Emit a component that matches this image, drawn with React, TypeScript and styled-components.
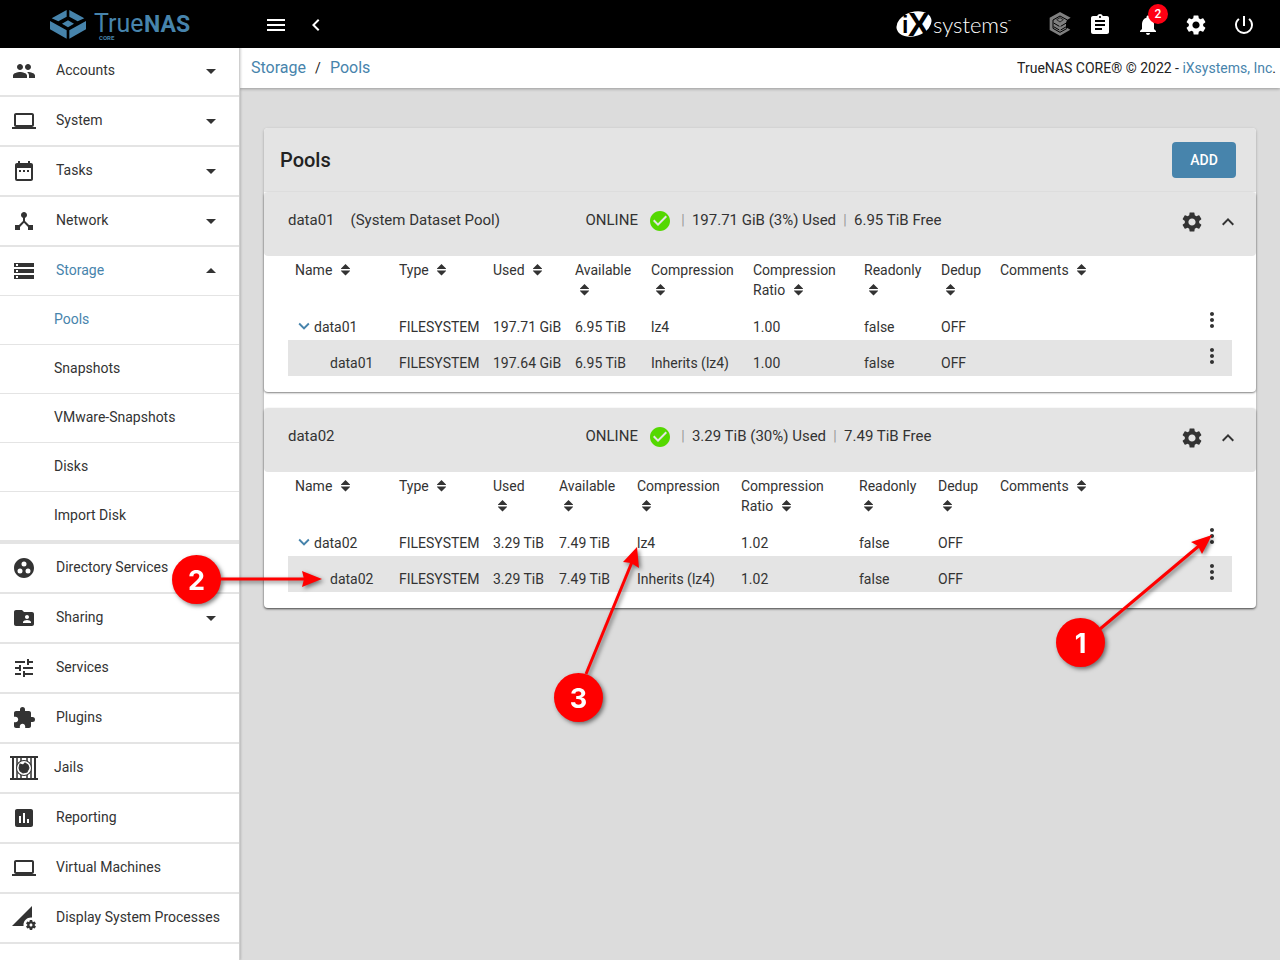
import React from 'react';
import styled, { createGlobalStyle } from 'styled-components';
import {
  MdArrowDropDown, MdArrowDropUp, MdAssessment, MdAssignment, MdCheckCircle, MdChevronLeft,
  MdComputer, MdDateRange, MdDeviceHub, MdExpandLess, MdExpandMore, MdExtension, MdFolderShared,
  MdGroupWork, MdMenu, MdMoreVert, MdNotifications, MdPeople, MdPermDataSetting,
  MdPowerSettingsNew, MdSettings, MdStorage, MdTune,
} from 'react-icons/md';

const color = {
  accent: '#4784ac',
  text: '#333333',
  line: '#e4e4e4',
  panel: '#e4e4e4',
  page: '#dcdcdc',
};

const GlobalStyle = createGlobalStyle`
  *, *::before, *::after { box-sizing: border-box; }
  body { margin: 0; background: ${color.page}; color: ${color.text}; font: 14px/20px Roboto, sans-serif; }
  a { color: inherit; text-decoration: none; }
  button { border: 0; padding: 0; background: none; color: inherit; font: inherit; cursor: pointer; }
  svg { display: block; }
`;

const Page = styled.div`
  position: relative;
  display: flex;
  flex-direction: column;
  min-height: 100vh;
  overflow: hidden;
`;

/* ---------- top bar ---------- */
const TopBar = styled.header`
  position: relative;
  z-index: 2;
  display: flex;
  align-items: center;
  height: 48px;
  background: #000;
  color: #fff;
`;
const Brand = styled.a`
  display: flex;
  justify-content: center;
  width: 240px;
`;
const TopTools = styled.div<{ $gap: number }>`
  display: flex;
  align-items: center;
  gap: ${(p) => p.$gap}px;
  padding: 2px 24px 0;
`;
const VendorGroup = styled.div`
  display: flex;
  align-items: center;
  gap: 34px;
  margin: 0 -8px 0 auto;
`;
const IconButton = styled.button`
  position: relative;
  display: block;
  width: 24px;
  height: 24px;
  font-size: 24px;
  line-height: 24px;
`;
const Badge = styled.span`
  position: absolute;
  top: -9px;
  right: -8px;
  width: 20px;
  height: 20px;
  border-radius: 50%;
  background: #ff0013;
  font-size: 12px;
  font-weight: 500;
  line-height: 20px;
  text-align: center;
`;

/* ---------- sidebar ---------- */
const Body = styled.div`
  display: flex;
  flex: 1;
`;
const Sidebar = styled.nav`
  position: relative;
  z-index: 1;
  flex: none;
  width: 240px;
  margin-top: -1px;
  border-right: 1px solid #cfcfcf;
  background: #fff;
  box-shadow: 1px 0 2px rgba(0, 0, 0, 0.16);
`;
const NavList = styled.ul`
  margin: 0;
  padding: 0;
  list-style: none;
`;
const NavEntry = styled.li`
  border-bottom: 2px solid ${color.line};
`;
const NavLink = styled.a<{ $active?: boolean }>`
  display: flex;
  align-items: center;
  height: 48px;
  padding: 0 16px 0 12px;
  color: ${(p) => (p.$active ? color.accent : color.text)};
  & > svg { flex: none; width: 24px; height: 24px; color: ${color.text}; }
`;
const NavLabel = styled.span<{ $tight?: boolean }>`
  flex: 1;
  padding: 0 0 2px ${(p) => (p.$tight ? 18 : 20)}px;
  white-space: nowrap;
`;
const SubList = styled(NavList)`
  border-top: 1px solid ${color.line};
  border-bottom: 1px solid ${color.line};
`;
const SubEntry = styled.li`
  border-bottom: 1px solid ${color.line};
`;
const SubLink = styled.a<{ $active?: boolean }>`
  display: block;
  padding: 13px 0 15px 54px;
  color: ${(p) => (p.$active ? color.accent : color.text)};
`;

/* ---------- content ---------- */
const Content = styled.main`
  flex: 1;
  min-width: 0;
`;
const CrumbBar = styled.div`
  display: flex;
  align-items: center;
  justify-content: space-between;
  height: 40px;
  padding: 0 4px 0 11px;
  background: #fff;
  color: #222;
  box-shadow: 0 1px 3px rgba(0, 0, 0, 0.3);
`;
const Crumbs = styled.div`
  display: flex;
  gap: 8px;
  font-size: 16px;
  & > a { color: ${color.accent}; }
  & > a + span { width: 8px; font-size: 14px; text-align: center; }
`;
const Copyright = styled.div`
  & > a { color: ${color.accent}; }
`;
const Card = styled.section`
  margin: 40px 24px;
  border-radius: 4px;
  background: #fff;
  box-shadow: 0 1px 3px rgba(0, 0, 0, 0.28);
`;
const CardHeader = styled.div`
  display: flex;
  align-items: center;
  justify-content: space-between;
  height: 64px;
  padding: 0 20px 0 16px;
  border-radius: 4px 4px 0 0;
  background: ${color.panel};
`;
const CardTitle = styled.h1`
  margin: 0;
  color: #222;
  font-size: 20px;
  font-weight: 500;
  line-height: 24px;
`;
const AddButton = styled.button`
  width: 64px;
  height: 36px;
  border-radius: 4px;
  background: ${color.accent};
  color: #fff;
  font-weight: 500;
`;
const Pools = styled.div`
  display: grid;
  gap: 16px;
`;
const Panel = styled.article`
  padding-bottom: 16px;
  border-radius: 4px;
  background: #fff;
  box-shadow: 0 1px 2px rgba(0, 0, 0, 0.5);
`;
const PanelHeader = styled.div`
  display: grid;
  grid-template-columns: 5fr 11fr;
  height: 64px;
  padding: 16px 16px 0 24px;
  border-radius: 4px;
  background: ${color.panel};
  font-size: 15px;
  line-height: 24px;
`;
const PanelName = styled.div`
  display: flex;
  gap: 16px;
`;
const PanelStatus = styled.div`
  display: flex;
  align-items: flex-start;
`;
const Healthy = styled(MdCheckCircle)`
  width: 24px;
  height: 24px;
  margin: 1px 2px 0 10px;
  color: #54d800;
`;
const Bar = styled.span`
  width: 10px;
  margin: 0 4px;
  color: #999;
  font-size: 14px;
  text-align: center;
`;
const PanelTools = styled.div`
  display: flex;
  gap: 12px;
  margin: 2px 0 0 auto;
`;

const TableWrap = styled.div`
  padding: 0 24px;
`;
const Table = styled.table`
  width: 100%;
  border-collapse: collapse;
  table-layout: fixed;
`;
const HeadCell = styled.th`
  height: 48px;
  padding: 4px 7px;
  font-weight: 400;
  text-align: left;
  vertical-align: top;
`;
const SortButton = styled.button`
  display: block;
  text-align: left;
  & > svg { display: inline-block; margin: 0 6px 0 5px; vertical-align: -1px; }
`;
const Row = styled.tr<{ $shaded?: boolean }>`
  height: 36px;
  background: ${(p) => (p.$shaded ? color.panel : 'transparent')};
`;
const Cell = styled.td<{ $indent?: boolean }>`
  padding: 13px 0 3px ${(p) => (p.$indent ? 42 : 7)}px;
  white-space: nowrap;
`;
const TreeName = styled.div`
  display: flex;
  & > button {
    display: flex;
    align-items: flex-start;
    width: 19px;
    height: 16px;
    color: ${color.accent};
    font-size: 22px;
  }
  & > button > svg { flex: none; margin: -2px 0 0 -2px; }
`;
const MenuCell = styled.td`
  padding: 4px 8px 8px;
`;

/* ---------- numbered callouts ---------- */
const Callouts = styled.svg`
  position: absolute;
  z-index: 3;
  top: 0;
  left: 0;
  pointer-events: none;
  filter: drop-shadow(2px 2px 2px rgba(0, 0, 0, 0.5));
`;

const TrueNasLogo = () => (
  <svg width="142" height="36" viewBox="0 0 142 36" role="img" aria-label="TrueNAS Core" fill={color.accent}>
    <g transform="translate(1 4) scale(0.3333)">
      <path d="M50 0V20L25 34 5 25Z M58 0V20L83 34 103 25Z M0 33 50 61V86L0 58Z M108 33 58 61V86L108 58Z M54 31 72 41 54 52 36 41Z" />
    </g>
    <text x="45" y="26" fontFamily="Roboto" fontSize="25" fontWeight="400">True</text>
    <text x="95" y="26" fontFamily="Roboto" fontSize="23" fontWeight="700">NAS</text>
    <text x="50" y="34" fontFamily="Roboto" fontSize="6" fontWeight="700">CORE</text>
  </svg>
);

const IxLogo = () => (
  <svg width="118" height="44" viewBox="0 0 118 44" role="img" aria-label="iXsystems" fill="#fff">
    <ellipse cx="18" cy="22" rx="18" ry="12" transform="rotate(-18 18 22)" />
    <text x="6" y="31" fill="#000" fontFamily="Liberation Sans" fontSize="23" fontWeight="700">i</text>
    <text x="12" y="34" fill="#000" fontFamily="Liberation Sans" fontSize="33" fontWeight="700">X</text>
    <text x="37" y="31" fontFamily="Lato" fontSize="22" fontWeight="300">systems</text>
    <text x="112" y="21" fontFamily="Lato" fontSize="4">™</text>
  </svg>
);

const TrueCommandIcon = () => (
  <svg width="24" height="24" viewBox="0 0 72 72">
    <path d="M36 0 68 17 57 24 54 32V50L58 48 67 53 36 71 5 54V17Z" fill="#808080" />
    <g fill="none" stroke="#000" strokeWidth="3">
      <path d="M58 24 36 12 15 24V49L36 61 56 50" />
      <path d="M17 33 34 43M17 44 34 54M55 33 38 43M55 44 38 54" />
      <path d="M36 17 46 23 36 30 26 23Z" strokeWidth="2" />
    </g>
  </svg>
);

const JailIcon = () => (
  <svg viewBox="0 0 28 24" overflow="visible" fill="none" stroke={color.text}>
    <g transform="translate(-2.330 -2) scale(1.167)">
      <path d="M0 1H28M0 23H28" strokeWidth="2" />
      <path d="M3 2V22M25 2V22" strokeWidth="2" />
      <path d="M7 2V22M21 2V22M11 2V22M17 2V22" strokeWidth="1.500" />
      <circle cx="14" cy="12" r="7.500" fill="#fff" strokeWidth="1" />
      <path d="M10 8 13 9 15 7 18 9 19 12 17 16 13 17 10 15 9 12Z" fill={color.text} strokeWidth="1" />
    </g>
  </svg>
);

const SortIcon = () => (
  <svg width="9" height="12" viewBox="0 0 9 12" fill={color.text} aria-hidden="true">
    <path d="M4.500 0 9 4.500V5H0V4.500Z M0 6.500H9V7L4.500 11.500 0 7Z" />
  </svg>
);

type NavItem = { label: string; icon: React.ReactNode; menu?: boolean; children?: string[] };
const nav: NavItem[] = [
  { label: 'Accounts', icon: <MdPeople />, menu: true },
  { label: 'System', icon: <MdComputer />, menu: true },
  { label: 'Tasks', icon: <MdDateRange />, menu: true },
  { label: 'Network', icon: <MdDeviceHub />, menu: true },
  { label: 'Storage', icon: <MdStorage />, menu: true, children: ['Pools', 'Snapshots', 'VMware-Snapshots', 'Disks', 'Import Disk'] },
  { label: 'Directory Services', icon: <MdGroupWork /> },
  { label: 'Sharing', icon: <MdFolderShared />, menu: true },
  { label: 'Services', icon: <MdTune /> },
  { label: 'Plugins', icon: <MdExtension /> },
  { label: 'Jails', icon: <JailIcon /> },
  { label: 'Reporting', icon: <MdAssessment /> },
  { label: 'Virtual Machines', icon: <MdComputer /> },
  { label: 'Display System Processes', icon: <MdPermDataSetting /> },
];

const columns = ['Name', 'Type', 'Used', 'Available', 'Compression', 'Compression Ratio', 'Readonly', 'Dedup', 'Comments'];

const pools = [
  {
    name: 'data01', note: '(System Dataset Pool)', used: '197.71 GiB (3%) Used', free: '6.95 TiB Free',
    widths: [104, 94, 82, 76, 102, 111, 77, 59],
    rows: [
      ['data01', 'FILESYSTEM', '197.71 GiB', '6.95 TiB', 'lz4', '1.00', 'false', 'OFF', ''],
      ['data01', 'FILESYSTEM', '197.64 GiB', '6.95 TiB', 'Inherits (lz4)', '1.00', 'false', 'OFF', ''],
    ],
  },
  {
    name: 'data02', note: '', used: '3.29 TiB (30%) Used', free: '7.49 TiB Free',
    widths: [104, 94, 66, 78, 104, 118, 79, 62],
    rows: [
      ['data02', 'FILESYSTEM', '3.29 TiB', '7.49 TiB', 'lz4', '1.02', 'false', 'OFF', ''],
      ['data02', 'FILESYSTEM', '3.29 TiB', '7.49 TiB', 'Inherits (lz4)', '1.02', 'false', 'OFF', ''],
    ],
  },
];

const callouts = [
  { n: '1', x: 1080.5, y: 642.5, line: 'M1100 629 1200 545', head: '1212,535 1191,542 1198,546 1202,554' },
  { n: '2', x: 196.5, y: 579.5, line: 'M220 579H304', head: '322,579 302,571 304,579 302,587' },
  { n: '3', x: 578.5, y: 697.5, line: 'M586 674 632 562', head: '637,547 623,562 631,563 639,568' },
];

export default function App() {
  return (
    <Page>
      <GlobalStyle />
      <TopBar>
        <Brand href="#home"><TrueNasLogo /></Brand>
        <TopTools $gap={16}>
          <IconButton aria-label="Toggle menu"><MdMenu /></IconButton>
          <IconButton aria-label="Collapse menu"><MdChevronLeft /></IconButton>
        </TopTools>
        <VendorGroup>
          <a href="#vendor"><IxLogo /></a>
          <IconButton aria-label="TrueCommand"><TrueCommandIcon /></IconButton>
        </VendorGroup>
        <TopTools $gap={24}>
          <IconButton aria-label="Tasks"><MdAssignment /></IconButton>
          <IconButton aria-label="Notifications"><MdNotifications /><Badge>2</Badge></IconButton>
          <IconButton aria-label="Settings"><MdSettings /></IconButton>
          <IconButton aria-label="Power"><MdPowerSettingsNew /></IconButton>
        </TopTools>
      </TopBar>

      <Body>
        <Sidebar>
          <NavList>
            {nav.map((item) => (
              <NavEntry key={item.label}>
                <NavLink href="#nav" $active={!!item.children}>
                  {item.icon}
                  <NavLabel $tight={item.label === 'Jails'}>{item.label}</NavLabel>
                  {item.menu && (item.children ? <MdArrowDropUp /> : <MdArrowDropDown />)}
                </NavLink>
                {item.children && (
                  <SubList>
                    {item.children.map((child, i) => (
                      <SubEntry key={child}><SubLink href="#sub" $active={i === 0}>{child}</SubLink></SubEntry>
                    ))}
                  </SubList>
                )}
              </NavEntry>
            ))}
          </NavList>
        </Sidebar>

        <Content>
          <CrumbBar>
            <Crumbs><a href="#storage">Storage</a><span>/</span><a href="#pools">Pools</a></Crumbs>
            <Copyright>TrueNAS CORE® © 2022 - <a href="#ix">iXsystems, Inc</a>.</Copyright>
          </CrumbBar>
          <Card>
            <CardHeader>
              <CardTitle>Pools</CardTitle>
              <AddButton>ADD</AddButton>
            </CardHeader>
            <Pools>
              {pools.map((pool) => (
                <Panel key={pool.name}>
                  <PanelHeader>
                    <PanelName><span>{pool.name}</span>{pool.note && <span>{pool.note}</span>}</PanelName>
                    <PanelStatus>
                      <span>ONLINE</span><Healthy />
                      <Bar>|</Bar><span>{pool.used}</span>
                      <Bar>|</Bar><span>{pool.free}</span>
                      <PanelTools>
                        <IconButton aria-label="Pool settings"><MdSettings /></IconButton>
                        <IconButton aria-label="Collapse pool"><MdExpandLess /></IconButton>
                      </PanelTools>
                    </PanelStatus>
                  </PanelHeader>
                  <TableWrap>
                    <Table>
                      <colgroup>
                        {pool.widths.map((w, i) => <col key={i} width={w} />)}
                        <col />
                        <col width={40} />
                      </colgroup>
                      <thead>
                        <tr>
                          {columns.map((c) => (
                            <HeadCell key={c}><SortButton>{c} <SortIcon /></SortButton></HeadCell>
                          ))}
                          <td />
                        </tr>
                      </thead>
                      <tbody>
                        {pool.rows.map((row, r) => (
                          <Row key={r} $shaded={r === 1}>
                            {row.map((value, i) => (
                              <Cell key={i} $indent={i === 0 && r === 1}>
                                {i === 0 && r === 0
                                  ? <TreeName><button aria-label="Collapse dataset"><MdExpandMore /></button>{value}</TreeName>
                                  : value}
                              </Cell>
                            ))}
                            <MenuCell><IconButton aria-label="Dataset actions"><MdMoreVert /></IconButton></MenuCell>
                          </Row>
                        ))}
                      </tbody>
                    </Table>
                  </TableWrap>
                </Panel>
              ))}
            </Pools>
          </Card>
        </Content>
      </Body>

      <Callouts width="1280" height="960" viewBox="0 0 1280 960">
        {callouts.map((c) => (
          <g key={c.n} fill="#f00">
            <path d={c.line} stroke="#f00" strokeWidth="3" />
            <polygon points={c.head} />
            <circle cx={c.x} cy={c.y} r="24.500" />
          </g>
        ))}
        {callouts.map((c) => (
          <text key={c.n} x={c.x} y={c.y + 10} fill="#fff" fontFamily="Inter" fontSize="27" fontWeight="700" textAnchor="middle">{c.n}</text>
        ))}
      </Callouts>
    </Page>
  );
}
